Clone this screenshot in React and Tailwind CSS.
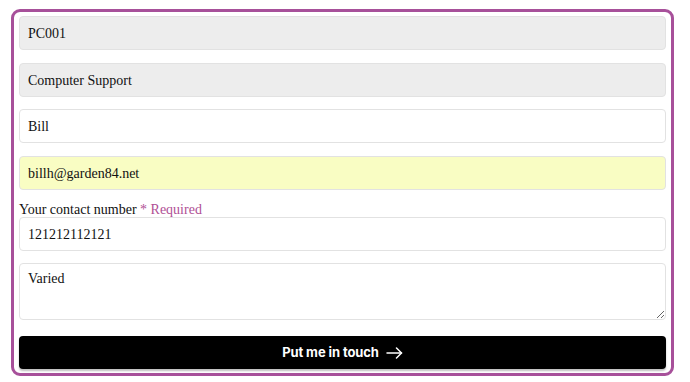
import React from "react";

const serif = { fontFamily: '"Liberation Serif", "Times New Roman", serif' };

function Field({ value, bg = "bg-white", className = "" }) {
  return (
    <input
      readOnly
      value={value}
      style={serif}
      className={`block w-full h-[34px] rounded-[4px] border border-[#e2e2e2] ${bg} pl-2 pt-[2px] text-[14px] text-[#111] outline-none ${className}`}
    />
  );
}

export default function App() {
  return (
    <div className="w-[690px] h-[382px] bg-white pt-[9px] pl-[11px]">
      <div className="w-[663px] h-[367px] rounded-[9px] border-[3px] border-[#a7509a] px-[5px] pt-[4px] flex flex-col">
        <Field value="PC001" bg="bg-[#ededed]" />
        <Field value="Computer Support" bg="bg-[#ededed]" className="mt-[13px]" />
        <Field value="Bill" className="mt-[12px]" />
        <Field value="billh@garden84.net" bg="bg-[#f9fdc3]" className="mt-[13px]" />
        <div style={serif} className="mt-[12px] h-[15px] text-[14px] leading-[15px] text-[#111]">
          Your contact number<span className="text-[#b04f95]"> * Required</span>
        </div>
        <Field value="121212112121" />
        <textarea
          readOnly
          value="Varied"
          style={serif}
          className="mt-[12px] block w-full h-[57px] rounded-[4px] border border-[#e2e2e2] bg-white px-2 pt-[4px] text-[14px] text-[#111] outline-none resize-y"
        />
        <button
          className="mt-[16px] h-[33px] w-full rounded-[4px] bg-black text-white flex items-center justify-center gap-[7px] shadow-[0_2px_2px_rgba(0,0,0,0.25)]"
          style={{ fontFamily: 'Inter, "Noto Sans", sans-serif' }}
        >
          <span className="text-[13px] font-bold tracking-[-0.1px]">Put me in touch</span>
          <svg width="17" height="12" viewBox="0 0 17 12" fill="none" stroke="white" strokeWidth="1.5" strokeLinecap="round" strokeLinejoin="round">
            <path d="M1 6h14.5" />
            <path d="M10.5 1l5 5-5 5" />
          </svg>
        </button>
      </div>
    </div>
  );
}
